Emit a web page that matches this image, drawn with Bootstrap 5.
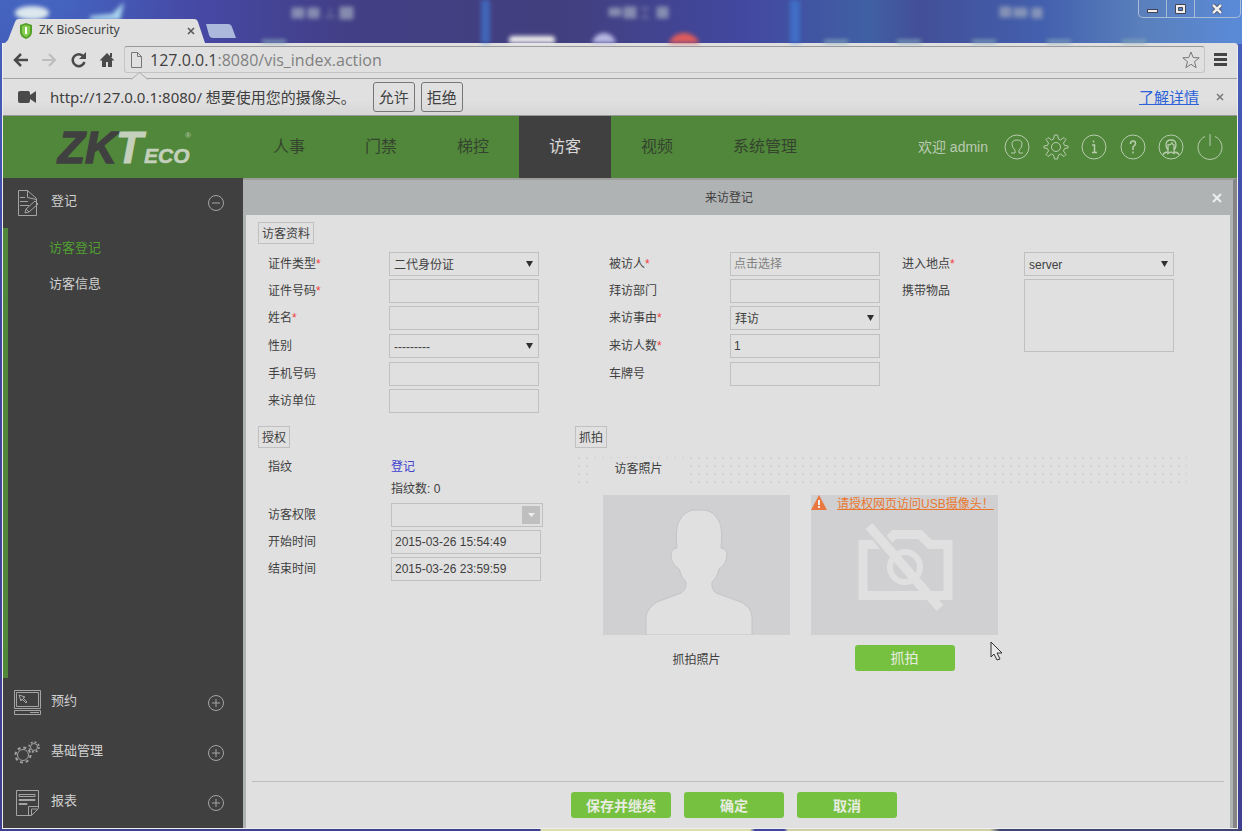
<!DOCTYPE html>
<html lang="zh-CN">
<head>
<meta charset="utf-8">
<meta name="viewport" content="width=device-width, initial-scale=1">
<title>ZK BioSecurity</title>
<link rel="stylesheet" href="https://cdn.jsdelivr.net/npm/bootstrap@5.3.0/dist/css/bootstrap.min.css">
<style>
:root{--paper:#e0e0e0;--ink:#404040;--leaf:#50873a;--lime:#76c240;--rule:#c0c0c0}
body{font:12px/18px "Liberation Sans","Noto Sans CJK SC",sans-serif;color:var(--ink);background:#3c4296}
svg{display:block;flex:none}
.desktop{min-height:100vh;padding:0 4px 2px 2px;background:
  linear-gradient(90deg,transparent 5%,#4648a4 16%,#423f86 28%,#423f7e 45%,#4248a0 60%,#4060a4 70%,#434f98 74%,#4360ae 84%,#5a80bc 92%,#5a8ad8 100%) top/100% 44px no-repeat,
  linear-gradient(90deg,transparent 540px,#dcdcae 541px 750px,#4044a0 755px 784px,#d0d0a8 788px 990px,#404470 1000px) bottom/100% 2px no-repeat,
  linear-gradient(#4464c0,#4144a0 35%,#404090)}
.wallpaper{filter:blur(2px)}
.wallpaper svg{position:absolute;inset:0 auto auto 0}
.tabstrip{height:43px}
.tabpane-top{width:200px;height:24px;margin-left:3px;padding:0 10px 0 15px}
.tabpane-top .shape{position:absolute;inset:0}
.tabname{font:12px/18px "Noto Sans","Noto Sans CJK SC",sans-serif;margin:0 auto 2px 7px}
.plain{border:0;background:none;padding:0;color:inherit;line-height:1}
.newtab{margin-bottom:5px}
.wincontrols{position:absolute;top:0;right:-3px;border:1px solid #a8bcd8;border-top:0;border-radius:0 0 5px 5px;height:18px}
.wincontrols button+button{border-left:1px solid #a8bcd8}
.browser{background:var(--paper);border-left:1px solid #eee;border-radius:0 4px 0 0;border-right:1px solid #eee;border-bottom:1px solid #eee}
.tools{height:36px;padding:0 10px 2px 10px;border-bottom:1px solid #a4a4a4}
.toolset{gap:14px}
.address{height:27px;border:1px solid #c4c4c4;border-top-color:#999;border-radius:3px;padding:0 4px 0 5px;margin:0 9px 0 10px}
.address input{font:16px/24px "Open Sans","Noto Sans CJK SC",sans-serif;width:100%;background:none;border:0;padding:0;outline:0;color:#808080}
.address .hostpart{font:16px/24px "Open Sans",sans-serif;margin-left:7px}
.infobar{height:37px;padding:0 12px 0 15px;font:15px/20px "Noto Sans","Noto Sans CJK SC",sans-serif;background:linear-gradient(var(--paper) 60%,#d6d6d6);border-bottom:1px solid #999}
.infobar .ask{margin:0 17px 0 14px}
.infobar .answer{height:30px;width:42px;border:1px solid #777;border-radius:3px;background:none;padding:0;color:var(--ink);font-size:15px;margin-right:6px}
.infobar a{color:#2c62d8}
.masthead{height:62px;background:var(--leaf)}
.brandbox{width:240px}
.mainnav a{display:block;padding:0 30px;line-height:62px;font-size:16px;color:#35442e;text-decoration:none}
.mainnav a.active{background:#404040;color:#d8d8d8}
.userarea{color:#bccbb4;font-size:14px;padding-right:14px}
.iconset{width:219px}
.lineicon{fill:none;stroke:#b8ccae;stroke-width:1}
.side{width:240px;background:#404040;color:#d0d0d0;font-size:13px}
.side .head{height:50px;padding:0 18px 0 10px;color:inherit;text-align:left}
.side .head .label-text{margin:-4px 0 0 10px;line-height:18px}
.side svg{fill:none;stroke:#a4a4a4;stroke-width:1}
.submenu{border-left:5px solid var(--leaf);padding:2px 0 0 41px}
.submenu a{display:block;line-height:36px;color:#d0d0d0;text-decoration:none}
.submenu a.active{color:#50a030}
.stage{background:#b0b3b4;border-top:2px solid #9c9e9c;border-right:4px solid #858585;padding:0 3px;min-width:0}
.titlebar{height:35px;padding-right:8px}
.titlebar h1{font-size:12px;font-weight:400;line-height:20px}
.sheet{background:var(--paper);padding:7px 6px 0 6px}
.sheetbody{padding:0 6px}
.tag{border:1px solid var(--rule);height:22px;line-height:22px;padding:0 3px;font-size:12px;margin:0;float:none;width:auto}
.fields{display:grid;grid-template-columns:121px 220px 121px 172px 122px 150px;grid-template-rows:24px 24px 25px 25px 24px 24px;row-gap:3px;margin:8px 0 0 10px;align-items:start}
.fields label,.grants label{line-height:25px}
.fields .newline{grid-column:1}
.fields label i{color:#f04040;font-style:normal}
.box{width:150px;height:24px;border:1px solid var(--rule);background:none;border-radius:0;padding:0 3px;color:var(--ink);font:12px/20px "Liberation Sans","Noto Sans CJK SC",sans-serif;outline:0;resize:none}
.box::placeholder{color:#808080;opacity:1}
select.box{appearance:none;padding:1px 4px 0;background:url("data:image/svg+xml,%3Csvg xmlns='http://www.w3.org/2000/svg' width='7' height='7'%3E%3Cpath d='M0 0h7L3.500 6z' fill='%23303030'/%3E%3C/svg%3E") no-repeat right 5px top 8px}
textarea.box{height:73px;grid-row:2/span 3;grid-column:6}
.lower{margin-top:13px}
.authcol{width:317px}
.grants{display:grid;grid-template-columns:123px 152px;grid-template-rows:23px 20px 24px 24px 24px;row-gap:3px;margin:6px 0 0 10px}
.grants a{color:#4040d0;text-decoration:none}
.combo{width:152px;height:24px;border:1px solid var(--rule);padding-right:2px}
.combo input{min-width:0;height:22px;border:0}
.combo button{width:18px;height:18px;background:#bfbfbf;flex:none}
.tabband{height:30px;margin:6px 31px 0 0;padding:4px 0 0 16px;background:radial-gradient(circle,#ccd4d8 1px,transparent 1px) 0 0/8px 8px,var(--paper)}
.tabband button{width:95px;height:26px;background:var(--paper)}
.shots{gap:21px;margin:11px 0 0 28px}
.frame{width:187px;height:140px;background:#d0d0d2}
.warn{position:absolute;inset:0 auto auto 0;gap:10px;line-height:18px;color:#e87830;white-space:nowrap}
.warn a{color:inherit}
.go{width:100px;height:26px;border:0;border-radius:3px;background:var(--lime);color:#e8ece0;font-size:14px;line-height:24px;padding:2px 0 0}
.shoot{margin-top:10px;padding:0}
.actions{border-top:1px solid #bdbdbd;padding:10px 8px 10px 0;gap:13px}
.pointer{position:absolute;left:990px;top:641px}
</style>
</head>
<body>
<div class="desktop d-flex flex-column position-relative">
  <div class="wallpaper" aria-hidden="true">
    <svg width="1200" height="43" viewBox="0 0 1200 43"><ellipse cx="30" cy="13" rx="17" ry="7" fill="#dce8ee"/><path d="M88 16q18-2 22-2l12-12-4 18H88z" fill="#a8d4ee"/><rect x="507" y="36" width="46" height="10" rx="4" fill="#eee"/><circle cx="602" cy="45" r="12" fill="#b8b8e4"/><circle cx="682" cy="50" r="17" fill="#e05c5c"/><path d="M479 0h9v43h-9zM788 0h10v43h-10z" fill="#4080e0" opacity=".6"/><path d="M260 42h24M822 42h24M895 42h24M970 42h24M1045 42h24M1120 42h24" stroke="#88a8bc" stroke-width="4"/><path d="M290 8h12v10h-12zM306 8h11v10h-11zM322 17h12M328 8v9M338 7h13v12h-13zM607 8h12v8h-12zM622 7h12v11h-12zM638 8h10M643 8v10M638 18h10M655 7h11v11h-11zM998 7h11v10h-11zM1012 8h13v9h-13zM1030 8h10v10h-10z" fill="#9ca6bc" stroke="#9ca6bc" opacity=".75"/></svg>
  </div>
  <div class="tabstrip d-flex align-items-end position-relative">
    <div class="tabpane-top position-relative d-flex align-items-center">
      <svg class="shape" width="200" height="24" viewBox="0 0 200 24"><path d="M0 24l3-3L10 3q1-3 4-3h175q3 0 4 3l6 18 1 3z" fill="#e0e0e0"/></svg>
      <svg class="position-relative" width="12" height="16" viewBox="0 0 12 16"><path d="M6 0l6 2v7q0 5-6 7-6-2-6-7V2z" fill="#54a028"/><path d="M6 2l4 1v6q0 3-4 5-4-2-4-5V3z" fill="#86cc50"/><path d="M6 4v7M5 5h2" stroke="#fff" stroke-width="2"/></svg>
      <span class="tabname position-relative text-nowrap">ZK BioSecurity</span>
      <button class="plain position-relative" aria-label="关闭标签页"><svg width="8" height="8" viewBox="0 0 8 8"><path d="M1 1l6 6M7 1L1 7" stroke="#555" stroke-width="1.500"/></svg></button>
    </div>
    <button class="plain newtab" aria-label="新标签页"><svg width="31" height="14" viewBox="0 0 31 14"><path d="M1 0h22q3 0 4 3l4 11H8q-3 0-4-3z" fill="#acb8dc"/></svg></button>
    <div class="wincontrols d-flex">
      <button class="plain px-2" aria-label="最小化"><svg width="11" height="16"><rect x=".5" y="8.500" width="10" height="3" fill="#eee" stroke="#445"/></svg></button>
      <button class="plain px-2" aria-label="最大化"><svg width="11" height="16"><path d="M.5 3.500h10v9H.5zM3.500 6.500h4v3h-4z" fill="#eee" fill-rule="evenodd" stroke="#445"/></svg></button>
      <button class="plain px-3" aria-label="关闭窗口"><svg width="13" height="16"><path d="M2 4l8 8M10 4l-8 8" stroke="#445" stroke-width="4"/><path d="M2 4l8 8M10 4l-8 8" stroke="#eee" stroke-width="2.500"/></svg></button>
    </div>
  </div>

  <div class="browser flex-fill d-flex flex-column">
    <div class="tools d-flex align-items-center">
      <div class="toolset d-flex align-items-center">
        <button class="plain" aria-label="后退"><svg width="15" height="14" viewBox="0 0 15 14" fill="none" stroke="#4a4a4a" stroke-width="2.500"><path d="M8 1L2 7l6 6M2 7h13"/></svg></button>
        <button class="plain" aria-label="前进"><svg width="15" height="14" viewBox="0 0 15 14" fill="none" stroke="#bdbdbd" stroke-width="2"><path d="M7 1l6 6-6 6M13 7H0"/></svg></button>
        <button class="plain" aria-label="刷新"><svg width="15" height="16" viewBox="0 0 15 16"><path d="M12.500 4.500A6 6 0 1 0 13.500 10" fill="none" stroke="#4a4a4a" stroke-width="2.500"/><path d="M15 0v7H8z" fill="#4a4a4a"/></svg></button>
        <button class="plain" aria-label="主页"><svg width="14" height="15" viewBox="0 0 14 15"><path d="M7 1l7 7-1 1-1-1v7H8v-5H6v5H2V8L1 9 0 8zM10 1h2v4h-2z" fill="#4a4a4a"/></svg></button>
      </div>
      <div class="address d-flex align-items-center flex-fill">
        <svg width="13" height="16" viewBox="0 0 13 16"><path d="M1.500.5h6l4 4v11h-10zM7.500.5v4h4" fill="none" stroke="#777"/></svg>
        <span class="hostpart">127.0.0.1</span><input aria-label="地址" value=":8080/vis_index.action">
        <svg width="18" height="18" viewBox="0 0 18 18"><path d="M9 1l2.200 5.500 6 .3-4.700 3.800 1.600 6L9 13.300l-5.100 3.300 1.600-6L.8 6.800l6-.3z" fill="none" stroke="#777"/></svg>
      </div>
      <button class="plain" aria-label="菜单"><svg width="13" height="13" viewBox="0 0 13 13"><path d="M0 1.500h13M0 6.500h13M0 11.500h13" stroke="#444" stroke-width="3"/></svg></button>
    </div>
    <div class="infobar d-flex align-items-center position-relative">
      <svg style="position:absolute;left:128px;top:-7px" width="18" height="8" viewBox="0 0 18 8"><path d="M0 7.500L8.500.5 17 7.500" fill="#e0e0e0" stroke="#aaa"/></svg>
      <svg width="18" height="12" viewBox="0 0 18 12"><path d="M2 0h8q2 0 2 2v2l6-4v12l-6-4v2q0 2-2 2H2q-2 0-2-2V2q0-2 2-2z" fill="#4a4a4a"/></svg>
      <span class="ask text-nowrap">http://127.0.0.1:8080/ 想要使用您的摄像头。</span>
      <button class="answer">允许</button><button class="answer">拒绝</button>
      <a class="ms-auto" href="#">了解详情</a>
      <button class="plain ms-3" aria-label="关闭提示"><svg width="10" height="8" viewBox="0 0 10 8"><path d="M2 1l6 6M8 1L2 7" stroke="#777" stroke-width="1.500"/></svg></button>
    </div>

    <header class="masthead d-flex align-items-center">
      <div class="brandbox">
        <svg width="240" height="62" viewBox="0 0 240 62" font-family="Liberation Sans,sans-serif" font-weight="bold" font-style="italic"><text x="55" y="47" font-size="44" fill="#404040" stroke="#404040" stroke-width="1.500">ZK</text><text x="113" y="47" font-size="44" fill="#c4d0bc" stroke="#c4d0bc">T</text><text x="141" y="47" font-size="21" fill="#c4d0bc" stroke="#c4d0bc" stroke-width=".5">ECO</text><text x="182" y="22" font-size="8" fill="#a8c098">®</text></svg>
      </div>
      <nav class="mainnav d-flex text-nowrap"><a href="#">人事</a><a href="#">门禁</a><a href="#">梯控</a><a href="#" class="active" aria-current="page">访客</a><a href="#">视频</a><a href="#">系统管理</a></nav>
      <div class="userarea d-flex align-items-center ms-auto">
        <span class="text-nowrap me-3">欢迎 admin</span>
        <div class="iconset d-flex justify-content-between">
          <a href="#" aria-label="用户"><svg class="lineicon" width="26" height="26" viewBox="0 0 26 26"><circle cx="13" cy="13" r="12"/><path d="M7 19h4v-3q-3-2-3-6 0-4 5-4t5 4q0 4-3 6v3h4"/></svg></a>
          <a href="#" aria-label="设置"><svg class="lineicon" width="26" height="26" viewBox="0 0 26 26"><circle cx="13" cy="13" r="4.500"/><path d="M11.500 1h3l1 4 2 1 3.500-2.500 2 2L20.500 9l1 2.500 3.500.5v2l-3.500.5-1 2.500 2.500 3.500-2 2-3.500-2.500-2 1-1 4h-3l-1-4-2-1L5 22.500l-2-2L5.500 17l-1-2.500L1 14v-2l3.500-.5 1-2.500L3 5.500l2-2L8.500 6l2-1z"/></svg></a>
          <a href="#" aria-label="信息"><svg class="lineicon" width="26" height="26" viewBox="0 0 26 26"><circle cx="13" cy="13" r="12"/><path d="M11 11h2.500v7M11 18.500h5M12.500 6.500v2" stroke-width="1.500"/></svg></a>
          <a href="#" aria-label="帮助"><svg class="lineicon" width="26" height="26" viewBox="0 0 26 26"><circle cx="13" cy="13" r="12"/><path d="M10.500 10q0-3 2.500-3t2.500 2.500Q15.500 11 13 13v3M13 17.500v2" stroke-width="1.500"/></svg></a>
          <a href="#" aria-label="客服"><svg class="lineicon" width="26" height="26" viewBox="0 0 26 26"><circle cx="13" cy="13" r="12"/><path d="M5 21q1-3 5-3v-2q-2-2-2-5 0-5 5-5t5 5q0 3-2 5v2q4 0 5 3M10 16v-5q3 0 4-2 1 2 2 2v5M9 20l4-2 4 2" stroke-width="1.300"/></svg></a>
          <a href="#" aria-label="退出"><svg class="lineicon" width="26" height="26" viewBox="0 0 26 26"><path d="M8 2.500a12 12 0 1 0 10 0M13 0v12"/></svg></a>
        </div>
      </div>
    </header>

    <div class="d-flex flex-fill">
      <aside class="side d-flex flex-column flex-shrink-0">
        <button class="plain head d-flex align-items-center">
          <svg width="28" height="28" viewBox="0 0 28 28"><path d="M5.500 1.500h9l9 8v17h-18zM14.500 1.500v7l9 2M7 8.500h5M7 12.500h8M7 16.500h9M12 24l1-4 9-8 3 3-9 8zM13 20l3 3"/></svg>
          <span class="label-text me-auto">登记</span>
          <svg width="18" height="18" viewBox="0 0 18 18"><circle cx="9" cy="9" r="7.500"/><path d="M5 9h8"/></svg>
        </button>
        <div class="submenu flex-fill"><a href="#" class="active">访客登记</a><a href="#">访客信息</a></div>
        <button class="plain head d-flex align-items-center">
          <svg width="28" height="28" viewBox="0 0 28 28"><path d="M1.500 1.500h26v18h-26zM3.500 3.500h22v14h-22zM1.500 21.500h26v4h-26zM17 23.500h9M6 6l6 2-2 1 4 4-1 1-4-4-1 2z"/></svg>
          <span class="label-text me-auto">预约</span>
          <svg width="18" height="18" viewBox="0 0 18 18"><circle cx="9" cy="9" r="7.500"/><path d="M5 9h8M9 5v8"/></svg>
        </button>
        <button class="plain head d-flex align-items-center">
          <svg width="28" height="28" viewBox="0 0 28 28"><circle cx="10" cy="16" r="5.500"/><circle cx="10" cy="16" r="7.500" stroke-width="2" stroke-dasharray="3 2.900"/><circle cx="21" cy="8" r="3.500"/><circle cx="21" cy="8" r="5" stroke-width="1.500" stroke-dasharray="2 1.920"/></svg>
          <span class="label-text me-auto">基础管理</span>
          <svg width="18" height="18" viewBox="0 0 18 18"><circle cx="9" cy="9" r="7.500"/><path d="M5 9h8M9 5v8"/></svg>
        </button>
        <button class="plain head d-flex align-items-center">
          <svg width="28" height="28" viewBox="0 0 28 28"><path d="M3.500 1.500h22v18l-7 7h-15zM15.500 26V17.500h10M18.500 26v-6h6M6 5.500h16v2H6zM6 10.500h16v1H6zM6 14.500h8v1H6z"/></svg>
          <span class="label-text me-auto">报表</span>
          <svg width="18" height="18" viewBox="0 0 18 18"><circle cx="9" cy="9" r="7.500"/><path d="M5 9h8M9 5v8"/></svg>
        </button>
      </aside>

      <main class="stage flex-fill d-flex flex-column">
        <div class="titlebar d-flex align-items-center">
          <h1 class="m-0 flex-fill text-center">来访登记</h1>
          <button class="plain" aria-label="关闭"><svg width="10" height="10" viewBox="0 0 10 10"><path d="M1 1l8 8M9 1L1 9" stroke="#eee" stroke-width="2"/></svg></button>
        </div>
        <form class="sheet flex-fill d-flex flex-column" onsubmit="return false">
          <div class="sheetbody flex-fill">
            <fieldset>
              <legend class="tag d-inline-block">访客资料</legend>
              <div class="fields">
                <label for="ctype">证件类型<i>*</i></label><select id="ctype" class="box"><option>二代身份证</option></select>
                <label for="host">被访人<i>*</i></label><input id="host" class="box" placeholder="点击选择">
                <label for="gate">进入地点<i>*</i></label><select id="gate" class="box"><option>server</option></select>
                <label for="cno">证件号码<i>*</i></label><input id="cno" class="box">
                <label for="dept">拜访部门</label><input id="dept" class="box">
                <label for="goods">携带物品</label><textarea id="goods" class="box"></textarea>
                <label for="vname" class="newline">姓名<i>*</i></label><input id="vname" class="box">
                <label for="why">来访事由<i>*</i></label><select id="why" class="box"><option>拜访</option></select>
                <label for="sex" class="newline">性别</label><select id="sex" class="box"><option>---------</option></select>
                <label for="num">来访人数<i>*</i></label><input id="num" class="box" value="1">
                <label for="tel" class="newline">手机号码</label><input id="tel" class="box">
                <label for="car">车牌号</label><input id="car" class="box">
                <label for="firm" class="newline">来访单位</label><input id="firm" class="box">
              </div>
            </fieldset>
            <div class="lower d-flex">
              <fieldset class="authcol flex-shrink-0">
                <legend class="tag d-inline-block">授权</legend>
                <div class="grants">
                  <span class="pt-1">指纹</span><a href="#" class="pt-1">登记</a>
                  <span></span><span>指纹数: 0</span>
                  <label for="level">访客权限</label><div class="combo d-flex align-items-center"><input id="level" class="box flex-fill"><button type="button" class="plain d-flex justify-content-center align-items-center" aria-label="展开"><svg width="7" height="5"><path d="M0 0h7L3.500 4z" fill="#eee"/></svg></button></div>
                  <label for="from">开始时间</label><input id="from" class="box" value="2015-03-26 15:54:49">
                  <label for="till">结束时间</label><input id="till" class="box" value="2015-03-26 23:59:59">
                </div>
              </fieldset>
              <fieldset class="flex-fill">
                <legend class="tag d-inline-block">抓拍</legend>
                <div class="tabband"><button type="button" class="plain pb-1">访客照片</button></div>
                <div class="shots d-flex">
                  <figure class="m-0 text-center">
                    <div class="frame"><svg width="187" height="140" viewBox="0 0 187 140"><path d="M43 140v-18q1-9 11-15l24-9q6-4 5-11-5-5-7-13-8-5-8-14 0-6 6-7-2-20 2-27 6-11 16-11h8q10 0 16 11 4 7 2 27 6 1 6 7-1 10-8 14-2 9-7 13-1 7 4 11l25 9q11 6 11 15v18z" fill="#e0e0e0" stroke="#c4c4c8"/></svg></div>
                    <figcaption class="mt-3">抓拍照片</figcaption>
                  </figure>
                  <div class="text-center">
                    <div class="frame position-relative">
                      <svg width="187" height="140" viewBox="0 0 187 140" fill="none" stroke="#e0e0e0" stroke-width="9"><path d="M52 49.500h22l9-10h26l10 10h18v51H52z"/><circle cx="94" cy="72" r="15" stroke-width="6"/><path d="M66 33l14 17M64 44l12 14" stroke="#d0d0d2" stroke-width="5"/><path d="M58 31l71 82"/></svg>
                      <div class="warn d-flex"><svg width="16" height="15" viewBox="0 0 16 15"><path d="M8 0l8 15H0z" fill="#e87840"/><path d="M8 5v5M8 11v2" stroke="#eee" stroke-width="2"/></svg><a href="#">请授权网页访问USB摄像头！</a></div>
                    </div>
                    <button type="button" class="go shoot">抓拍</button>
                  </div>
                </div>
              </fieldset>
            </div>
          </div>
          <div class="actions d-flex justify-content-center"><button class="go fw-bold">保存并继续</button><button class="go fw-bold">确定</button><button type="button" class="go fw-bold">取消</button></div>
        </form>
      </main>
    </div>
  </div>
  <svg class="pointer" width="13" height="20" viewBox="0 0 13 20" aria-hidden="true"><path d="M1 1v15l3-3 3 6 3-1-3-6h5z" fill="#e8e8e8" stroke="#333"/></svg>
</div>
<script src="https://cdn.jsdelivr.net/npm/bootstrap@5.3.0/dist/js/bootstrap.bundle.min.js"></script>
</body>
</html>
